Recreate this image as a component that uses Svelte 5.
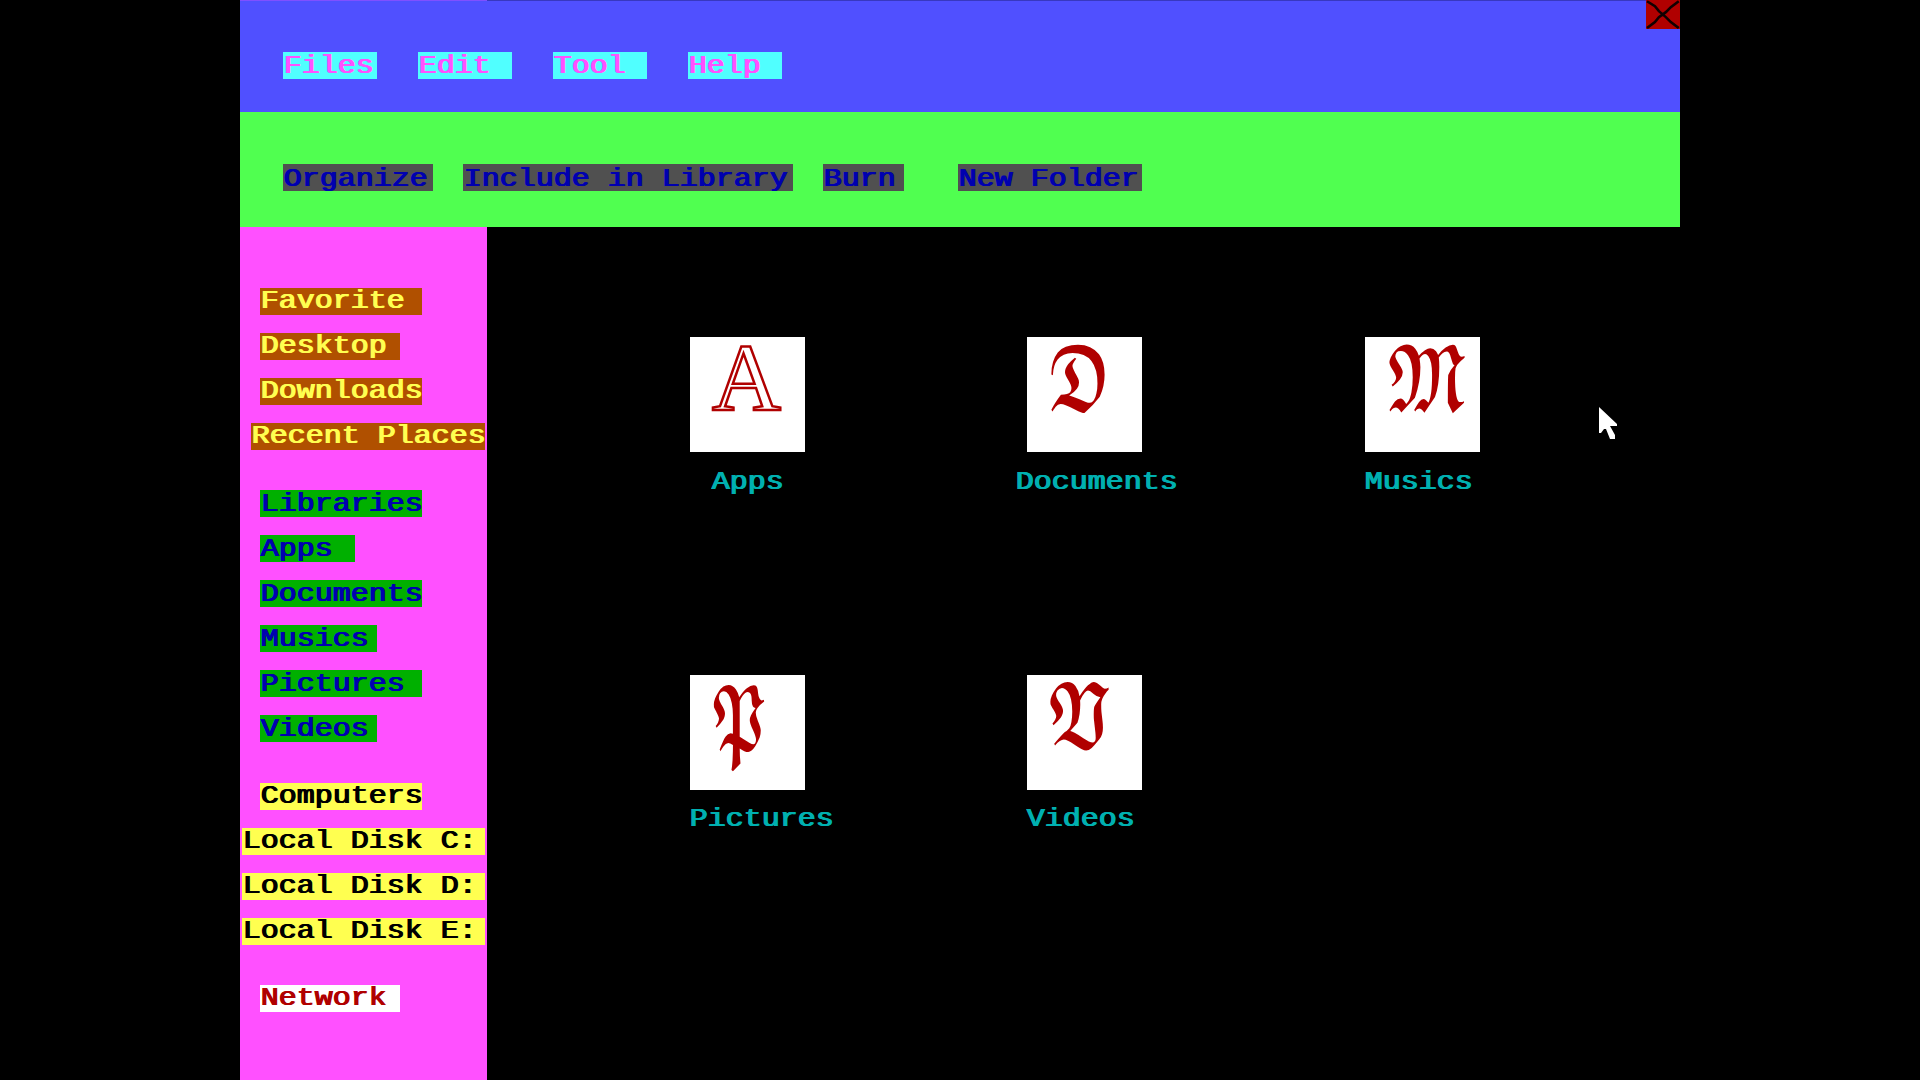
<script>
  const menu = ['Files', 'Edit', 'Tool', 'Help'];
  const tools = [
    { text: 'Organize', w: 150.75, gap: 29.25 },
    { text: 'Include in Library', w: 330.75, gap: 29.25 },
    { text: 'Burn', w: 81, gap: 54 },
    { text: 'New Folder', w: 184.5, gap: 0 }
  ];
  const groups = [
    { kind: 'favorite', items: [['Favorite', 162], ['Desktop', 139.5], ['Downloads', 162], ['Recent Places', 234, 'near']] },
    { kind: 'library', items: [['Libraries', 162], ['Apps', 94.5], ['Documents', 162], ['Musics', 117], ['Pictures', 162], ['Videos', 117]] },
    { kind: 'computer', items: [['Computers', 162], ['Local Disk C:', 243, 'edge'], ['Local Disk D:', 243, 'edge'], ['Local Disk E:', 243, 'edge']] },
    { kind: 'network', items: [['Network', 139.5]] }
  ];
  // Initial letter with its left edge, baseline and width inside the tile
  const folders = [
    { name: 'Apps', glyph: 'A', x: 22, y: 73, w: 69, shift: 22.5, style: 'hollow' },
    { name: 'Documents', glyph: '𝕯', x: 20, y: 73, w: 62, shift: -11.25, style: 'solid' },
    { name: 'Musics', glyph: '𝕸', x: 20, y: 73, w: 84, shift: 0, style: 'solid' },
    { name: 'Pictures', glyph: '𝕻', x: 20, y: 75, w: 58, shift: 0, style: 'solid' },
    { name: 'Videos', glyph: '𝖁', x: 19, y: 73, w: 67, shift: 0, style: 'solid' }
  ];
</script>

<main class="stage">
  <div class="screen">
    <header class="menubar">
      <nav class="menu">
        {#each menu as m}<button class="tag cyan"><span class="t">{m}</span></button>{/each}
      </nav>
      <button class="close" aria-label="Close">
        <svg viewBox="0 0 34 29"><path d="M1 1 9 6 13 11 20 17 25 22 33 28M33 1 25 7 20 12 13 17 9 22 1 28" /></svg>
      </button>
    </header>
    <nav class="toolbar">
      {#each tools as t}
        <button class="tag gray" style:width="{t.w}px" style:margin-right="{t.gap}px"><span class="t">{t.text}</span></button>
      {/each}
    </nav>
    <div class="body">
      <aside>
        {#each groups as g}
          <section class={g.kind}>
            {#each g.items as [text, w, place]}
              <div class="tag {place ?? ''}" style:width="{w}px"><span class="t">{text}</span></div>
            {/each}
          </section>
        {/each}
      </aside>
      <div class="files">
        {#each folders as f}
          <div class="folder">
            <div class="tile">
              <svg viewBox="0 0 115 115"><text class={f.style} x={f.x} y={f.y} textLength={f.w} lengthAdjust="spacingAndGlyphs">{f.glyph}</text></svg>
            </div>
            <div class="label" style:margin-left="{f.shift}px"><span class="t">{f.name}</span></div>
          </div>
        {/each}
      </div>
    </div>
    <svg class="cursor" viewBox="0 0 18 33"><path d="M0 0 18 17V19H11L16 28V32H11L7 22H5L2 26H0Z" /></svg>
  </div>
</main>

<style>
  :global(body) { background: #000; overflow: hidden; }
  .stage { display: flex; justify-content: center; width: 1920px; height: 1080px; background: #000; }
  .screen { position: relative; display: flex; flex-direction: column; width: 1440px; height: 1080px; font-family: 'Liberation Mono', monospace; }
  button { border: 0; padding: 0; margin: 0; font: inherit; text-align: left; }
  .menubar { display: flex; justify-content: space-between; align-items: flex-start; height: 112.25px; box-sizing: border-box; background: linear-gradient(90deg, #8050ff 247.5px, #3838c0 247.5px) top / 100% 1px no-repeat #5050ff; }
  .menu { display: flex; gap: 40.5px; padding: 51.6px 0 0 42.6px; }
  .tag { display: block; flex: none; height: 27px; box-sizing: border-box; padding: 5.25px 0 0 0; white-space: nowrap; }
  .t { display: block; width: max-content; height: 18px; font-size: 25px; line-height: 18px; white-space: pre; transform: scaleX(1.2); transform-origin: 0 0; text-shadow: 0.6px 0 currentColor, 1.2px 0 currentColor; }
  .cyan { width: 94.5px; padding-top: 3.5px; background: #50ffff; color: #ff50ff; }
  .close { width: 33.75px; height: 29.25px; background: #b00000; }
  .close svg { display: block; width: 100%; height: 100%; fill: none; stroke: #100; stroke-width: 2.6; }
  .toolbar { display: flex; height: 115px; box-sizing: border-box; padding: 52px 0 0 42.6px; background: #50ff50; }
  .gray { padding-top: 3.5px; background: #505050; color: #0000b0; }
  .body { display: flex; flex: 1; }
  aside { width: 247.25px; box-sizing: border-box; padding-top: 60.75px; background: #ff50ff; }
  section { display: flex; flex-direction: column; gap: 18px; margin-bottom: 40.3px; }
  section .tag { margin-left: 20.25px; }
  section .near { margin-left: 11.25px; }
  section .edge { margin-left: 2.25px; }
  .favorite .tag { background: #b05000; color: #ffff50; }
  .library .tag { background: #00b000; color: #0000b0; }
  .computer .tag { background: #ffff50; color: #000; }
  .network .tag { background: #fff; color: #b00000; }
  .files { display: grid; grid-template-columns: repeat(3, 337.4px); grid-auto-rows: 337.5px; padding: 110.2px 0 0 202.75px; width: 1192px; box-sizing: border-box; }
  .tile { width: 115px; height: 115px; background: #fff; }
  .tile svg { display: block; width: 100%; height: 100%; overflow: visible; }
  .tile text { fill: #b00000; }
  .tile .solid { font-family: 'DejaVu Math TeX Gyre', 'DejaVu Sans', serif; font-size: 84px; }
  .tile .hollow { font-family: 'Liberation Serif', serif; font-size: 96px; fill: #fff; stroke: #b00000; stroke-width: 2.5px; }
  .label { padding-top: 21.25px; color: #00b0b0; }
  .label .t { margin-left: -1.25px; }
  .cursor { position: absolute; left: 1359px; top: 406.5px; width: 18px; height: 33px; fill: #fff; }
</style>
